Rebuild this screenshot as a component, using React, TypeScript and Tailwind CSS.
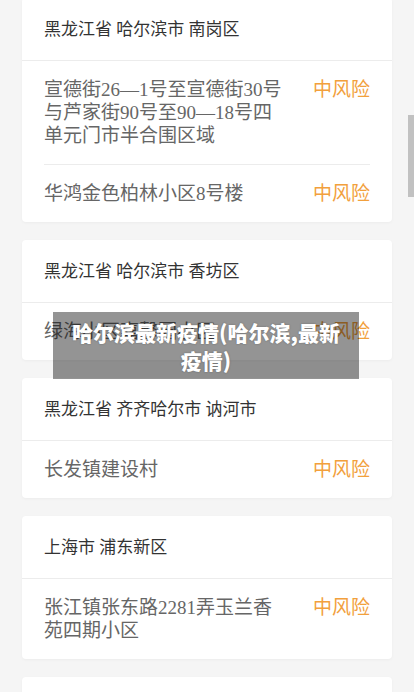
const font = { fontFamily: '"Liberation Serif", "Noto Sans CJK SC", serif' };

type Area = {
  region: string;
  places: { name: string; level: string }[];
};

const areas: Area[] = [
  {
    region: "黑龙江省 哈尔滨市 南岗区",
    places: [
      { name: "宣德街26—1号至宣德街30号与芦家街90号至90—18号四单元门市半合围区域", level: "中风险" },
      { name: "华鸿金色柏林小区8号楼", level: "中风险" },
    ],
  },
  {
    region: "黑龙江省 哈尔滨市 香坊区",
    places: [{ name: "绿海小区嘉馨园小区", level: "中风险" }],
  },
  {
    region: "黑龙江省 齐齐哈尔市 讷河市",
    places: [{ name: "长发镇建设村", level: "中风险" }],
  },
  {
    region: "上海市 浦东新区",
    places: [{ name: "张江镇张东路2281弄玉兰香苑四期小区", level: "中风险" }],
  },
  {
    region: "上海市 闵行区",
    places: [{ name: "七宝镇", level: "中风险" }],
  },
];

function AreaCard({ area }: { area: Area }) {
  return (
    <div className="bg-white rounded-[4px] shadow-[0_1px_3px_rgba(0,0,0,0.04)]">
      <div className="px-[22px] pt-[20px] pb-[19px] border-b border-[#ececec] text-[17px] leading-[23px] text-[#333]">
        {area.region}
      </div>
      <div className="px-[22px] divide-y divide-[#ececec]">
        {area.places.map((p) => (
          <div key={p.name} className="flex justify-between py-[17px]">
            <span className="w-[242px] text-[19px] leading-[23px] text-[#666]">
              {p.name}
            </span>
            <span className="text-[19px] leading-[23px] text-[#f2a03c]">
              {p.level}
            </span>
          </div>
        ))}
      </div>
    </div>
  );
}

export default function App() {
  return (
    <div
      className="relative w-[414px] h-[692px] overflow-hidden bg-[#f5f5f5]"
      style={font}
    >
      <div className="flex flex-col gap-[18px] px-[22px] -mt-[2px]">
        {areas.map((a) => (
          <AreaCard key={a.region} area={a} />
        ))}
      </div>

      <div className="absolute left-[53px] top-[312px] w-[306px] h-[67px] flex items-center justify-center px-[12px] bg-[rgba(0,0,0,0.42)]">
        <p
          className="text-center text-[21px] leading-[28px] font-black text-white [text-shadow:0_0_2px_rgba(0,0,0,0.3)]"
          style={{ fontFamily: '"Noto Sans CJK SC", sans-serif' }}
        >
          哈尔滨最新疫情(哈尔滨,最新疫情)
        </p>
      </div>

      <div className="absolute right-0 top-[115px] w-[6px] h-[82px] bg-[#c1c1c1]" />
    </div>
  );
}
